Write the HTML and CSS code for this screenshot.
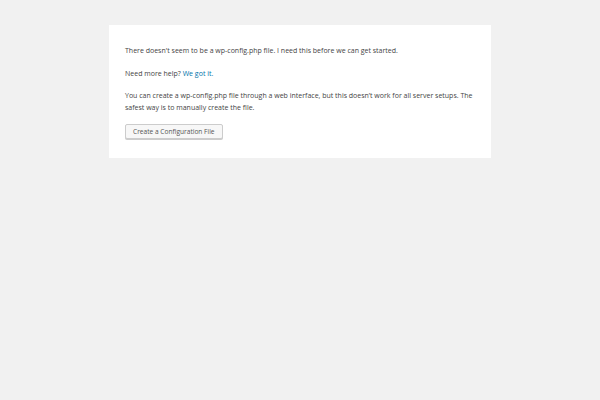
FILE: index.html
```html
<!DOCTYPE html>
<html lang="en">
<head>
<meta charset="utf-8">
<title>WordPress &rsaquo; Setup Configuration File</title>
<link rel="stylesheet" href="styles.css">
</head>
<body>
<div class="card">
<p>There doesn't seem to be a wp-config.php file. I need this before we can get started.</p>
<p>Need more help? <a href="#">We got it.</a></p>
<p>You can create a wp-config.php file through a web interface, but this doesn&#8217;t work for all server setups. The safest way is to manually create the file.</p>
<p class="step"><a href="#" class="button">Create a Configuration File</a></p>
</div>
</body>
</html>
```
FILE: styles.css
```css
html {
  background: #f1f1f1;
}
body {
  margin: 25px auto 0;
  width: 382px;
  background: #fff;
  font-family: "Open Sans", "Liberation Sans", sans-serif;
  color: #444;
  font-size: 7px;
}
.card {
  background: #fff;
  padding: 9px 16px 8px;
  box-shadow: 0 1px 2px rgba(0, 0, 0, 0.13);
}
p {
  margin: 11px 0;
  line-height: 11.5px;
}
a {
  color: #0073aa;
  text-decoration: none;
}
.step {
  margin: 11px 0;
}
.button {
  display: inline-block;
  height: 15px;
  line-height: 13px;
  padding: 0 7px;
  font-size: 6.6px;
  color: #555;
  background: #f7f7f7;
  border: 1px solid #ccc;
  border-radius: 2px;
  box-shadow: 0 1px 0 #ccc;
  box-sizing: border-box;
  vertical-align: top;
}
```
